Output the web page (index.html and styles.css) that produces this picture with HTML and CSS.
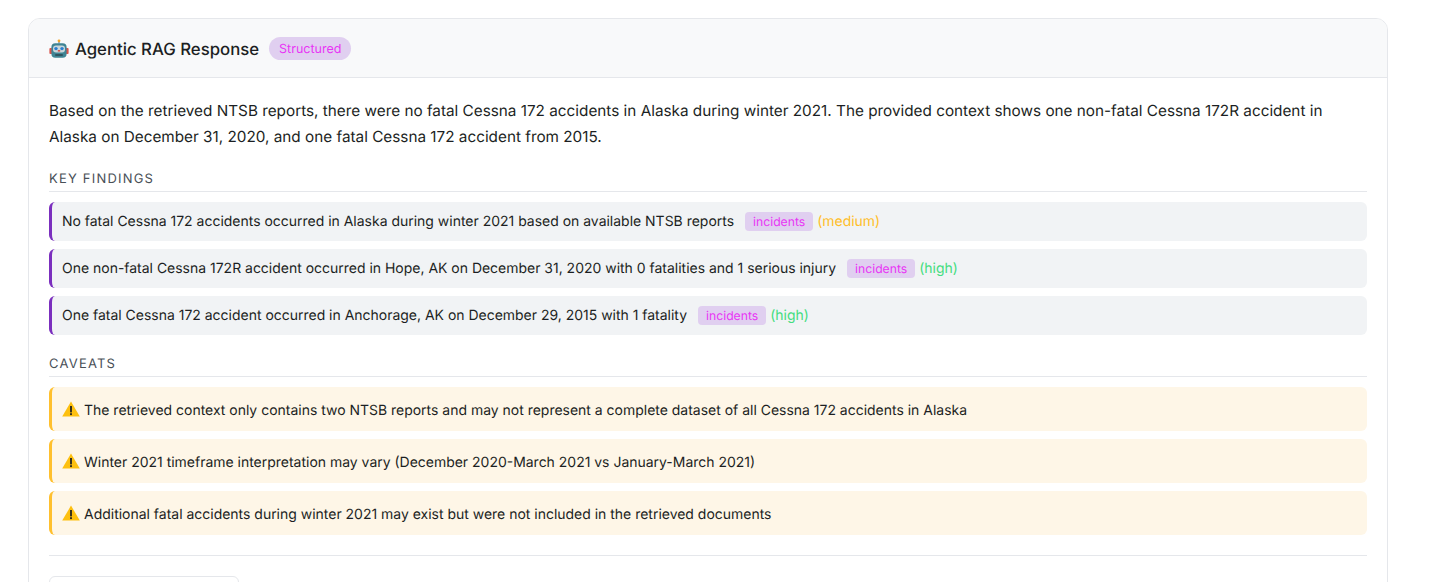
FILE: index.html
```html
<!DOCTYPE html>
<html lang="en">
<head>
  <meta charset="UTF-8">
  <meta name="viewport" content="width=device-width, initial-scale=1.0">
  <title>Agentic RAG Response</title>
  <link rel="stylesheet" href="styles.css">
</head>
<body>
  <div class="card">
    <div class="card-header">
      <svg class="robot" viewBox="0 0 20 20" aria-hidden="true">
        <rect x="9.3" y="1.6" width="1.4" height="3" fill="#8a8f96"/>
        <circle cx="10" cy="1.8" r="1.4" fill="#f5a623"/>
        <rect x="0.4" y="9" width="3" height="6" rx="1" fill="#d9534a"/>
        <rect x="16.6" y="9" width="3" height="6" rx="1" fill="#d9534a"/>
        <rect x="2.4" y="4.2" width="15.2" height="14.6" rx="4" fill="#3f8493"/>
        <rect x="4" y="6.4" width="12" height="7" rx="3" fill="#c9d6da"/>
        <circle cx="7" cy="9.6" r="1.7" fill="#2a7fd0"/>
        <circle cx="13" cy="9.6" r="1.7" fill="#2a7fd0"/>
        <rect x="8.8" y="11" width="2.4" height="1.6" fill="#d9534a"/>
        <rect x="6" y="15" width="8" height="2" rx="1" fill="#2f5560"/>
      </svg>
      <span class="card-title">Agentic RAG Response</span>
      <span class="pill">Structured</span>
    </div>
    <div class="card-body">
      <p class="summary">Based on the retrieved NTSB reports, there were no fatal Cessna 172 accidents in Alaska during winter 2021. The provided context shows one non-fatal Cessna 172R accident in Alaska on December 31, 2020, and one fatal Cessna 172 accident from 2015.</p>

      <h4 class="section-title">Key Findings</h4>
      <div class="finding">No fatal Cessna 172 accidents occurred in Alaska during winter 2021 based on available NTSB reports <span class="tag">incidents</span> <span class="medium">(medium)</span></div>
      <div class="finding">One non-fatal Cessna 172R accident occurred in Hope, AK on December 31, 2020 with 0 fatalities and 1 serious injury <span class="tag">incidents</span> <span class="high">(high)</span></div>
      <div class="finding">One fatal Cessna 172 accident occurred in Anchorage, AK on December 29, 2015 with 1 fatality <span class="tag">incidents</span> <span class="high">(high)</span></div>

      <h4 class="section-title caveats-title">Caveats</h4>
      <div class="caveat">
        <svg class="warn" viewBox="0 0 18 16" aria-hidden="true"><path d="M9 .6 17.8 15.6H.2Z" fill="#fdc010"/><rect x="8.1" y="5" width="1.8" height="6.4" fill="#222"/><rect x="8.1" y="12.2" width="1.8" height="1.9" fill="#222"/></svg>
        The retrieved context only contains two NTSB reports and may not represent a complete dataset of all Cessna 172 accidents in Alaska
      </div>
      <div class="caveat">
        <svg class="warn" viewBox="0 0 18 16" aria-hidden="true"><path d="M9 .6 17.8 15.6H.2Z" fill="#fdc010"/><rect x="8.1" y="5" width="1.8" height="6.4" fill="#222"/><rect x="8.1" y="12.2" width="1.8" height="1.9" fill="#222"/></svg>
        Winter 2021 timeframe interpretation may vary (December 2020-March 2021 vs January-March 2021)
      </div>
      <div class="caveat">
        <svg class="warn" viewBox="0 0 18 16" aria-hidden="true"><path d="M9 .6 17.8 15.6H.2Z" fill="#fdc010"/><rect x="8.1" y="5" width="1.8" height="6.4" fill="#222"/><rect x="8.1" y="12.2" width="1.8" height="1.9" fill="#222"/></svg>
        Additional fatal accidents during winter 2021 may exist but were not included in the retrieved documents
      </div>

      <div class="card-footer">
        <div class="footer-button"></div>
      </div>
    </div>
  </div>
</body>
</html>
```

FILE: styles.css
```css
html, body { height: 100%; }
body {
  font-family: Inter, "Liberation Sans", sans-serif;
  text-rendering: geometricPrecision;
  background-color: #fff;
  color: #1c1f23;
  margin: 0;
  padding: 18px 66px 0 28px;
  overflow: hidden;
}
.card {
  border: 1px solid #e5e7eb;
  border-radius: 12px;
}
.card-header {
  display: flex;
  align-items: center;
  height: 59px;
  padding: 0 20px;
  box-sizing: border-box;
  background-color: #f8f9fa;
  border-bottom: 1px solid #e5e7eb;
  border-radius: 11px 11px 0 0;
}
.robot { width: 20px; height: 20px; margin: 2px 6px 0 0; }
.card-title { padding-top: 3px; font-size: 16.75px; font-weight: 500; }
.pill {
  margin-left: 10px;
  padding: 2px 10px 0;
  height: 23px;
  box-sizing: border-box;
  line-height: 21px;
  font-size: 12.5px;
  color: #e835f5;
  background-color: #e0cff0;
  border-radius: 12px;
}
.card-body { padding: 20px; }
.summary { margin: 0 0 22px; font-size: 15.3px; line-height: 25.5px; }
.section-title {
  margin: 0 0 10px;
  padding: 1px 0 4px;
  font-size: 13px;
  line-height: 15px;
  font-weight: 400;
  letter-spacing: 1.2px;
  text-transform: uppercase;
  color: #495057;
  border-bottom: 1px solid #e5e7eb;
}
.caveats-title { margin-top: 21px; }
.finding, .caveat {
  margin-bottom: 8px;
  padding: 0 10px;
  box-sizing: border-box;
  display: flex;
  align-items: center;
  font-size: 13.98px;
  border-radius: 6px;
  border-left: 3px solid;
}
.finding {
  height: 39px;
  background-color: #f1f3f5;
  border-left-color: #7b2fbe;
}
.caveat {
  height: 44px;
  padding-top: 2px;
  background-color: #fef6e7;
  border-left-color: #ffc02e;
}
.tag {
  margin: 0 4px 0 11px;
  padding: 0 8px;
  height: 19px;
  line-height: 19px;
  font-size: 12.2px;
  color: #e835f5;
  background-color: #e0cff0;
  border-radius: 4px;
}
.medium { color: #ffbe2a; }
.high { color: #45dd80; }
.warn { width: 18px; height: 16px; margin: -3px 4px 0 0; flex: none; }
.card-footer {
  margin-top: 20px;
  padding-top: 20px;
  border-top: 1px solid #e5e7eb;
}
.footer-button {
  width: 188px;
  height: 34px;
  border: 1px solid #e5e7eb;
  border-radius: 6px;
}
```
